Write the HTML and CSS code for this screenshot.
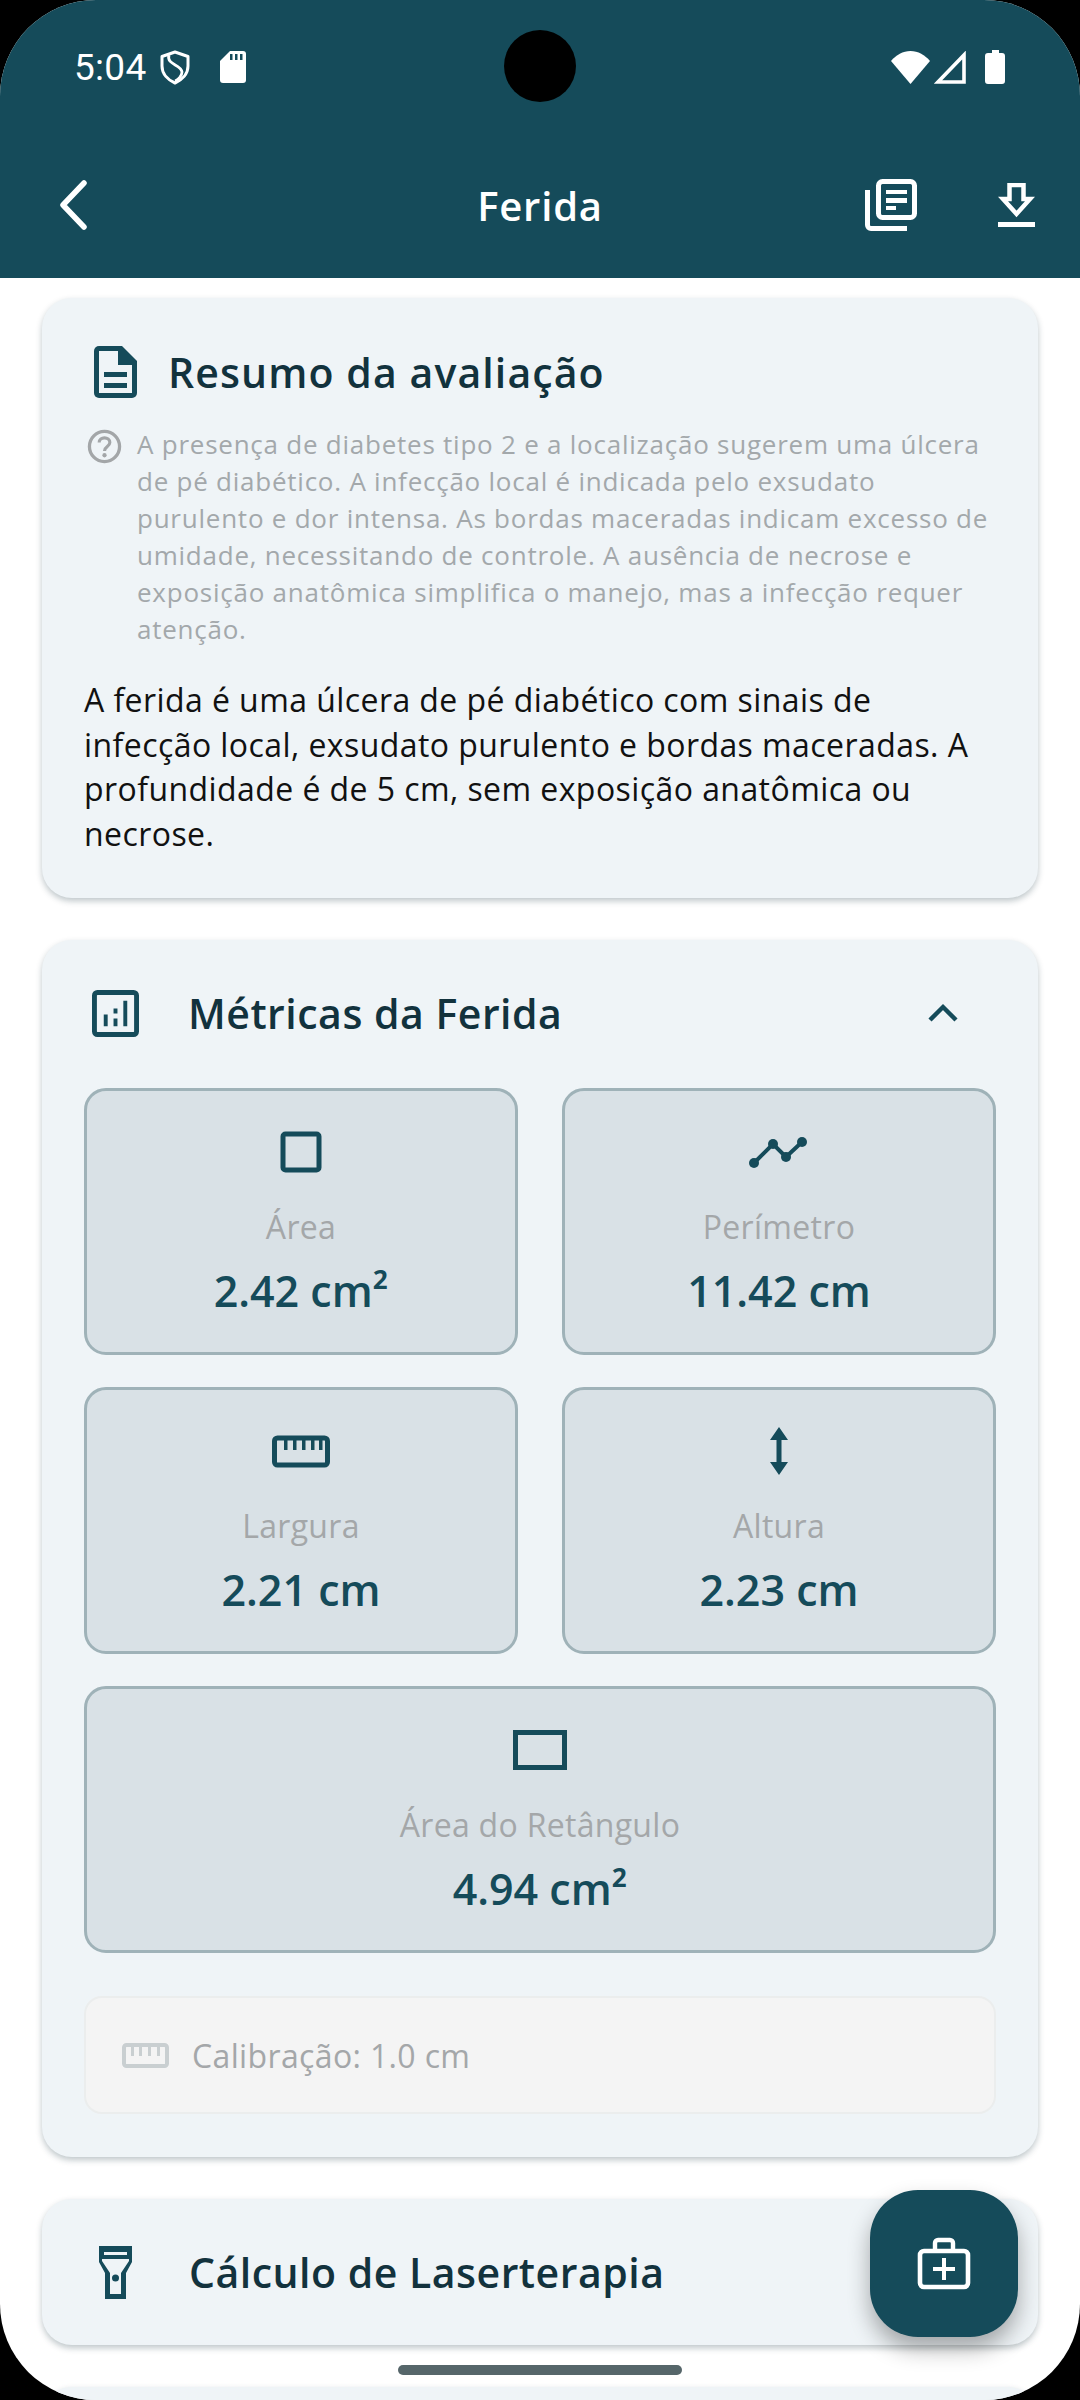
FILE: index.html
```html
<!DOCTYPE html>
<html lang="pt-BR">
<head>
    <meta charset="UTF-8">
    <meta name="viewport" content="width=device-width, initial-scale=1.0">
    <title>Ferida</title>
    <link rel="stylesheet" href="styles.css">
</head>
<body>
    <div class="phone">
        <header class="top">
            <div class="status">
                <div class="status-left">
                    <span class="clock">5:04</span>
                    <svg class="st-shield" viewBox="0 0 30 35"><path d="M15 2 L28 6.500 V16 C28 24 22 30 15 33 C8 30 2 24 2 16 V6.500 Z" fill="none" stroke="#fff" stroke-width="3" stroke-linejoin="round"/><path d="M9 5 C6 15 21 14 22 22 C22 26 18 30 15 31" fill="none" stroke="#fff" stroke-width="2.800"/></svg>
                    <svg class="st-sd" viewBox="0 0 26 32"><path d="M10 0 H23 A3 3 0 0 1 26 3 V29 A3 3 0 0 1 23 32 H3 A3 3 0 0 1 0 29 V10 Z" fill="#fff"/><path d="M10 3 H12.500 V9 H10 Z M15 3 H17.500 V9 H15 Z M20 3 H22.500 V9 H20 Z" fill="#154b5a"/></svg>
                </div>
                <div class="status-right">
                    <svg class="st-wifi" viewBox="0 0 39 33"><path d="M19.500 33 L0 10 C5 4 12 0 19.500 0 C27 0 34 4 39 10 Z" fill="#fff"/></svg>
                    <svg class="st-signal" viewBox="0 0 32 33"><path d="M30 4 V31 H4 Z" fill="none" stroke="#fff" stroke-width="3.600"/></svg>
                    <svg class="st-batt" viewBox="0 0 20 34"><path d="M7 0 H14 V3 H17 A3 3 0 0 1 20 6 V31 A3 3 0 0 1 17 34 H3 A3 3 0 0 1 0 31 V6 A3 3 0 0 1 3 3 H7 Z" fill="#fff"/></svg>
                </div>
            </div>
            <div class="toolbar">
                <svg class="tb-back" viewBox="0 0 30 50"><path d="M26 3 L5 25 L26 47" fill="none" stroke="#fff" stroke-width="5.500" stroke-linecap="round" stroke-linejoin="round"/></svg>
                <h1 class="tb-title">Ferida</h1>
                <div class="tb-actions">
                    <svg class="tb-report" viewBox="0 0 52 52"><rect x="13.500" y="2.500" width="36" height="36" rx="4" fill="none" stroke="#fff" stroke-width="5"/><path d="M2.500 11 V46 A3.500 3.500 0 0 0 6 49.500 H42" fill="none" stroke="#fff" stroke-width="5"/><path d="M21 11 H42 V15 H21 Z M21 19 H42 V24 H21 Z M21 27 H31 V31 H21 Z" fill="#fff"/></svg>
                    <svg class="tb-download" viewBox="0 0 37 45"><path d="M11.500 2 H25.500 V16 H32 L18.500 31 L5 16 H11.500 Z" fill="none" stroke="#fff" stroke-width="4.500" stroke-linejoin="miter"/><path d="M0 39 H37 V44 H0 Z" fill="#fff"/></svg>
                </div>
            </div>
        </header>

        <main class="content">
            <section class="card summary">
                <div class="summary-head">
                    <svg class="ic-doc" viewBox="0 0 43 52"><path d="M5 0 H28 L43 15 V47 A5 5 0 0 1 38 52 H5 A5 5 0 0 1 0 47 V5 A5 5 0 0 1 5 0 Z" fill="#154b5a"/><path d="M5 5 H24 V19 H38 V47 H5 Z" fill="#eff4f7"/><path d="M10 26 H33 V31 H10 Z M10 37 H33 V42 H10 Z" fill="#154b5a"/></svg>
                    <h2 class="card-title card-title-wide">Resumo da avaliação</h2>
                </div>
                <div class="reason">
                    <svg class="ic-help" viewBox="0 0 36 36"><circle cx="18" cy="18" r="15.500" fill="none" stroke="#a3a6a8" stroke-width="3.400"/><path d="M12.500 14 C12.500 7.500 23.500 7.500 23.500 14 C23.500 18 18 18 18 22.500" fill="none" stroke="#a3a6a8" stroke-width="3.200"/><circle cx="18" cy="27" r="2.200" fill="#a3a6a8"/></svg>
                    <p class="reason-text">A presença de diabetes tipo 2 e a localização sugerem uma úlcera de pé diabético. A infecção local é indicada pelo exsudato purulento e dor intensa. As bordas maceradas indicam excesso de umidade, necessitando de controle. A ausência de necrose e exposição anatômica simplifica o manejo, mas a infecção requer atenção.</p>
                </div>
                <p class="summary-text">A ferida é uma úlcera de pé diabético com sinais de infecção local, exsudato purulento e bordas maceradas. A profundidade é de 5 cm, sem exposição anatômica ou necrose.</p>
            </section>

            <section class="card metrics">
                <div class="section-head">
                    <svg class="ic-chart" viewBox="0 0 48 48"><rect x="2.500" y="2.500" width="43" height="43" rx="3" fill="none" stroke="#154b5a" stroke-width="5"/><path d="M12 25 H16 V37 H12 Z M22 29 H26 V37 H22 Z M22 19 H26 V24 H22 Z M32 11 H36 V37 H32 Z" fill="#154b5a"/></svg>
                    <h2 class="card-title">Métricas da Ferida</h2>
                    <svg class="ic-chevron" viewBox="0 0 32 20"><path d="M3 17 L16 4 L29 17" fill="none" stroke="#154b5a" stroke-width="4.400"/></svg>
                </div>
                <div class="tiles">
                    <div class="tile">
                        <svg class="tile-icon" viewBox="0 0 60 60"><rect x="12" y="12" width="36" height="36" rx="2.500" fill="none" stroke="#154b5a" stroke-width="5"/></svg>
                        <span class="tile-label">Área</span>
                        <span class="tile-value">2.42 cm²</span>
                    </div>
                    <div class="tile">
                        <svg class="tile-icon" viewBox="0 0 60 60"><path d="M5 41 L24 22 L37 35 L53 20" fill="none" stroke="#154b5a" stroke-width="4"/><circle cx="5" cy="41" r="5" fill="#154b5a"/><circle cx="24" cy="22" r="5" fill="#154b5a"/><circle cx="37" cy="35" r="5" fill="#154b5a"/><circle cx="53" cy="20" r="5" fill="#154b5a"/></svg>
                        <span class="tile-label">Perímetro</span>
                        <span class="tile-value">11.42 cm</span>
                    </div>
                    <div class="tile">
                        <svg class="tile-icon" viewBox="0 0 60 60"><rect x="3.500" y="17" width="53" height="27" rx="3" fill="none" stroke="#154b5a" stroke-width="5"/><path d="M13 17 H16.500 V29 H13 Z M22 17 H25.500 V29 H22 Z M31 17 H34.500 V29 H31 Z M40 17 H43.500 V29 H40 Z M48 17 H51.500 V29 H48 Z" fill="#154b5a"/></svg>
                        <span class="tile-label">Largura</span>
                        <span class="tile-value">2.21 cm</span>
                    </div>
                    <div class="tile">
                        <svg class="tile-icon" viewBox="0 0 60 60"><path d="M30 6 L39 19 H32.500 V41 H39 L30 54 L21 41 H27.500 V19 H21 Z" fill="#154b5a"/></svg>
                        <span class="tile-label">Altura</span>
                        <span class="tile-value">2.23 cm</span>
                    </div>
                    <div class="tile tile-wide">
                        <svg class="tile-icon" viewBox="0 0 60 60"><rect x="5.500" y="12.500" width="49" height="35" fill="none" stroke="#154b5a" stroke-width="5"/></svg>
                        <span class="tile-label">Área do Retângulo</span>
                        <span class="tile-value">4.94 cm²</span>
                    </div>
                </div>
                <div class="calib">
                    <svg class="ic-ruler" viewBox="0 0 47 25"><rect x="2" y="2" width="43" height="21" rx="2.500" fill="none" stroke="#c9cfd1" stroke-width="4"/><path d="M9 2 H12 V13 H9 Z M17 2 H20 V13 H17 Z M26 2 H29 V13 H26 Z M35 2 H38 V13 H35 Z" fill="#c9cfd1"/></svg>
                    <span class="calib-text">Calibração: 1.0 cm</span>
                </div>
            </section>

            <section class="card laser">
                <svg class="ic-torch" viewBox="0 0 33 53"><path d="M0 0 H33 V16 L27 27 V53 H6 V27 L0 16 Z" fill="#154b5a"/><path d="M5 6 H28 V9 H5 Z" fill="#eff4f7"/><path d="M3 13 H30 V15 L22 27 V48 H11 V27 L3 15 Z" fill="#eff4f7"/><circle cx="16.500" cy="32" r="3.500" fill="#154b5a"/></svg>
                <h2 class="card-title">Cálculo de Laserterapia</h2>
            </section>

            <section class="card next-card"></section>
        </main>

        <div class="camera"></div>
        <button class="fab">
            <svg viewBox="0 0 54 54"><path d="M18 14 V6 A3 3 0 0 1 21 3 H33 A3 3 0 0 1 36 6 V14" fill="none" stroke="#fff" stroke-width="4.400"/><rect x="3" y="14" width="48" height="36" rx="4" fill="none" stroke="#fff" stroke-width="4.600"/><path d="M25 21 H29 V30 H38 V34 H29 V43 H25 V34 H16 V30 H25 Z" fill="#fff"/></svg>
        </button>
        <div class="home-bar"></div>
    </div>
</body>
</html>
```
FILE: styles.css
```css
* {
    box-sizing: border-box;
}

body {
    margin: 0;
    background-color: #000;
    font-family: "Open Sans", Arial, sans-serif;
}

.phone {
    position: relative;
    width: 1080px;
    height: 2400px;
    overflow: hidden;
    background-color: #fff;
    border-radius: 96px;
}

.top {
    height: 278px;
    background-color: #154b5a;
    color: #fff;
}

.status {
    display: flex;
    justify-content: space-between;
    align-items: center;
    height: 100px;
    padding: 34px 75px 0 74px;
}

.status-left,
.status-right {
    display: flex;
    align-items: center;
}

.clock {
    font-family: Roboto, sans-serif;
    font-size: 37px;
    letter-spacing: 0.3px;
    margin-right: 13px;
}

.st-shield {
    width: 30px;
    height: 35px;
    margin-right: 30px;
}

.st-sd {
    width: 26px;
    height: 32px;
}

.st-wifi {
    width: 39px;
    height: 33px;
    margin-right: 4px;
}

.st-signal {
    width: 32px;
    height: 33px;
    margin-right: 19px;
}

.st-batt {
    width: 20px;
    height: 34px;
}

.toolbar {
    display: grid;
    grid-template-columns: 1fr auto 1fr;
    align-items: center;
    height: 178px;
    padding: 32px 45px 0;
}

.tb-back {
    width: 30px;
    height: 50px;
    margin-left: 13px;
}

.tb-title {
    margin: 0;
    font-size: 40px;
    font-weight: 600;
    letter-spacing: 0.8px;
}

.tb-actions {
    display: flex;
    align-items: center;
    justify-content: flex-end;
    gap: 81px;
}

.tb-report {
    width: 52px;
    height: 52px;
}

.tb-download {
    width: 37px;
    height: 45px;
}

.content {
    display: flex;
    flex-direction: column;
    gap: 42px;
    padding: 20px 42px 0;
}

.card {
    background-color: #eff4f7;
    border-radius: 30px;
    box-shadow: 0 3px 6px rgba(20, 50, 60, 0.28);
}

.card-title {
    margin: 0;
    font-size: 41px;
    font-weight: 600;
    color: #12323d;
    letter-spacing: 0.5px;
}

.card-title-wide {
    letter-spacing: 1.1px;
}

.summary {
    padding: 48px 42px 0;
    height: 600px;
}

.summary-head {
    display: flex;
    align-items: center;
    gap: 31px;
    padding-left: 10px;
    height: 52px;
}

.ic-doc {
    width: 43px;
    height: 52px;
}

.reason {
    display: flex;
    gap: 15px;
    margin-top: 28px;
}

.ic-help {
    flex: none;
    width: 35px;
    height: 35px;
    margin-top: 3px;
    margin-left: 3px;
}

.reason-text {
    margin: 0;
    font-size: 26px;
    line-height: 37px;
    letter-spacing: 0.76px;
    color: #a3a8ab;
}

.summary-text {
    margin: 30px 0 0;
    font-size: 32px;
    line-height: 44.500px;
    letter-spacing: 0.43px;
    color: #111;
}

.metrics {
    height: 1217px;
    padding: 0 42px;
}

.section-head {
    display: flex;
    align-items: center;
    height: 146px;
    margin-bottom: 2px;
    padding-left: 8px;
}

.ic-chart {
    width: 47px;
    height: 47px;
    margin-right: 49px;
}

.ic-chevron {
    width: 32px;
    height: 20px;
    margin-left: auto;
    margin-right: 37px;
}

.tiles {
    display: grid;
    grid-template-columns: 1fr 1fr;
    gap: 32px 44px;
}

.tile {
    display: flex;
    flex-direction: column;
    align-items: center;
    height: 267px;
    padding-top: 31px;
    background-color: #d9e1e6;
    border: 3px solid #9fb2b8;
    border-radius: 22px;
}

.tile-wide {
    grid-column: 1 / 3;
}

.tile-icon {
    width: 60px;
    height: 60px;
}

.tile-label {
    margin-top: 24px;
    font-size: 32px;
    line-height: 42px;
    color: #a4a7a9;
    letter-spacing: 0.3px;
}

.tile-value {
    margin-top: 15px;
    font-size: 43px;
    line-height: 56px;
    font-weight: 600;
    color: #154b5a;
}

.calib {
    display: flex;
    align-items: center;
    gap: 23px;
    height: 118px;
    margin-top: 43px;
    padding-left: 36px;
    background-color: #f4f4f4;
    border: 2px solid #ebeded;
    border-radius: 18px;
}

.ic-ruler {
    width: 47px;
    height: 25px;
}

.calib-text {
    font-size: 32px;
    color: #a4a7a9;
    letter-spacing: 0.36px;
}

.laser {
    display: flex;
    align-items: center;
    height: 146px;
    padding-left: 57px;
    gap: 57px;
}

.ic-torch {
    width: 33px;
    height: 53px;
}

.next-card {
    height: 60px;
}

.camera {
    position: absolute;
    top: 30px;
    left: 504px;
    width: 72px;
    height: 72px;
    border-radius: 50%;
    background-color: #000;
}

.fab {
    position: absolute;
    left: 870px;
    top: 2190px;
    display: flex;
    align-items: center;
    justify-content: center;
    width: 148px;
    height: 147px;
    padding: 0;
    border: 0;
    border-radius: 48px;
    background-color: #154b5a;
    box-shadow: 0 12px 22px rgba(0, 0, 0, 0.32);
}

.fab svg {
    width: 54px;
    height: 54px;
}

.home-bar {
    position: absolute;
    left: 398px;
    top: 2365px;
    width: 284px;
    height: 10px;
    border-radius: 5px;
    background-color: #56666a;
}
```
